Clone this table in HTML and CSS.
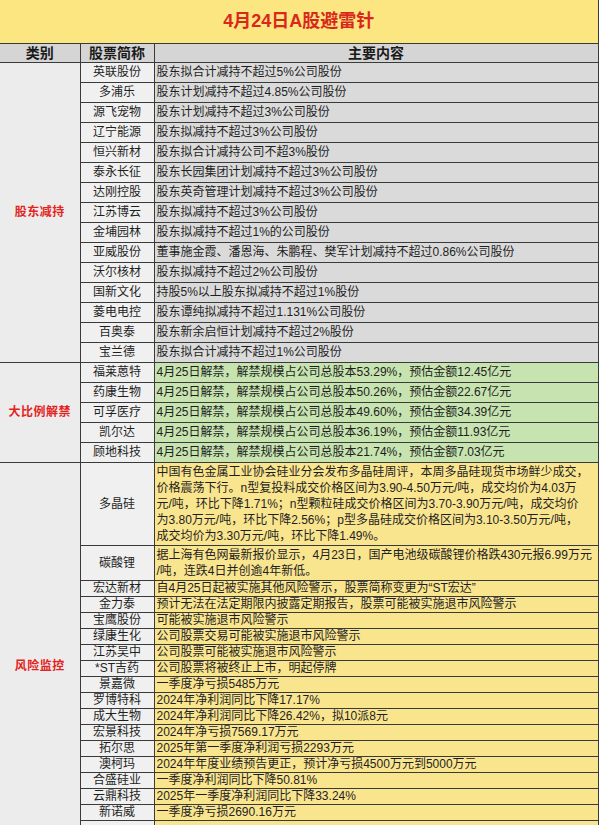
FILE: index.html
```html
<!DOCTYPE html>
<html lang="zh-CN">
<head>
<meta charset="utf-8">
<title>4月24日A股避雷针</title>
<link rel="stylesheet" href="styles.css">
</head>
<body>
<table class="sheet">
  <colgroup><col class="c-cat"><col class="c-name"><col class="c-main"></colgroup>
  <tr class="title"><td colspan="3">4月24日A股避雷针</td></tr>
  <tr class="head"><th class="first">类别</th><th>股票简称</th><th>主要内容</th></tr>

  <tr class="s1"><td class="cat" rowspan="15">股东减持</td><td class="name">英联股份</td><td class="main grey">股东拟合计减持不超过5%公司股份</td></tr>
  <tr class="s1"><td class="name">多浦乐</td><td class="main grey">股东计划减持不超过4.85%公司股份</td></tr>
  <tr class="s1"><td class="name">源飞宠物</td><td class="main grey">股东计划减持不超过3%公司股份</td></tr>
  <tr class="s1"><td class="name">辽宁能源</td><td class="main grey">股东拟减持不超过3%公司股份</td></tr>
  <tr class="s1"><td class="name">恒兴新材</td><td class="main grey">股东拟合计减持公司不超3%股份</td></tr>
  <tr class="s1"><td class="name">泰永长征</td><td class="main grey">股东长园集团计划减持不超过3%公司股份</td></tr>
  <tr class="s1"><td class="name">达刚控股</td><td class="main grey">股东英奇管理计划减持不超过3%公司股份</td></tr>
  <tr class="s1"><td class="name">江苏博云</td><td class="main grey">股东拟减持不超过3%公司股份</td></tr>
  <tr class="s1"><td class="name">金埔园林</td><td class="main grey">股东拟减持不超过1%的公司股份</td></tr>
  <tr class="s1"><td class="name">亚威股份</td><td class="main grey">董事施金霞、潘恩海、朱鹏程、樊军计划减持不超过0.86%公司股份</td></tr>
  <tr class="s1"><td class="name">沃尔核材</td><td class="main grey">股东拟减持不超过2%公司股份</td></tr>
  <tr class="s1"><td class="name">国新文化</td><td class="main grey">持股5%以上股东拟减持不超过1%股份</td></tr>
  <tr class="s1"><td class="name">菱电电控</td><td class="main grey">股东谭纯拟减持不超过1.131%公司股份</td></tr>
  <tr class="s1"><td class="name">百奥泰</td><td class="main grey">股东新余启恒计划减持不超过2%股份</td></tr>
  <tr class="s1"><td class="name">宝兰德</td><td class="main grey">股东拟合计减持不超过1%公司股份</td></tr>

  <tr class="s1"><td class="cat" rowspan="5">大比例解禁</td><td class="name">福莱蒽特</td><td class="main green">4月25日解禁，解禁规模占公司总股本53.29%，预估金额12.45亿元</td></tr>
  <tr class="s1"><td class="name">药康生物</td><td class="main green">4月25日解禁，解禁规模占公司总股本50.26%，预估金额22.67亿元</td></tr>
  <tr class="s1"><td class="name">可孚医疗</td><td class="main green">4月25日解禁，解禁规模占公司总股本49.60%，预估金额34.39亿元</td></tr>
  <tr class="s1"><td class="name">凯尔达</td><td class="main green">4月25日解禁，解禁规模占公司总股本36.19%，预估金额11.93亿元</td></tr>
  <tr class="s1"><td class="name">顾地科技</td><td class="main green">4月25日解禁，解禁规模占公司总股本21.74%，预估金额7.03亿元</td></tr>

  <tr class="multi"><td class="cat" rowspan="20">风险监控</td><td class="name">多晶硅</td><td class="main yellow">中国有色金属工业协会硅业分会发布多晶硅周评，本周多晶硅现货市场鲜少成交，<br>价格震荡下行。n型复投料成交价格区间为3.90-4.50万元/吨，成交均价为4.03万<br>元/吨，环比下降1.71%；n型颗粒硅成交价格区间为3.70-3.90万元/吨，成交均价<br>为3.80万元/吨，环比下降2.56%；p型多晶硅成交价格区间为3.10-3.50万元/吨，<br>成交均价为3.30万元/吨，环比下降1.49%。</td></tr>
  <tr class="multi"><td class="name">碳酸锂</td><td class="main yellow">据上海有色网最新报价显示，4月23日，国产电池级碳酸锂价格跌430元报6.99万元<br>/吨，连跌4日并创逾4年新低。</td></tr>
  <tr class="s3"><td class="name">宏达新材</td><td class="main yellow">自4月25日起被实施其他风险警示，股票简称变更为“ST宏达”</td></tr>
  <tr class="s3"><td class="name">金力泰</td><td class="main yellow">预计无法在法定期限内披露定期报告，股票可能被实施退市风险警示</td></tr>
  <tr class="s3"><td class="name">宝鹰股份</td><td class="main yellow">可能被实施退市风险警示</td></tr>
  <tr class="s3"><td class="name">绿康生化</td><td class="main yellow">公司股票交易可能被实施退市风险警示</td></tr>
  <tr class="s3"><td class="name">江苏吴中</td><td class="main yellow">公司股票可能被实施退市风险警示</td></tr>
  <tr class="s3"><td class="name">*ST吉药</td><td class="main yellow">公司股票将被终止上市，明起停牌</td></tr>
  <tr class="s3"><td class="name">景嘉微</td><td class="main yellow">一季度净亏损5485万元</td></tr>
  <tr class="s3"><td class="name">罗博特科</td><td class="main yellow">2024年净利润同比下降17.17%</td></tr>
  <tr class="s3"><td class="name">成大生物</td><td class="main yellow">2024年净利润同比下降26.42%，拟10派8元</td></tr>
  <tr class="s3"><td class="name">宏景科技</td><td class="main yellow">2024年净亏损7569.17万元</td></tr>
  <tr class="s3"><td class="name">拓尔思</td><td class="main yellow">2025年第一季度净利润亏损2293万元</td></tr>
  <tr class="s3"><td class="name">澳柯玛</td><td class="main yellow">2024年年度业绩预告更正，预计净亏损4500万元到5000万元</td></tr>
  <tr class="s3"><td class="name">合盛硅业</td><td class="main yellow">一季度净利润同比下降50.81%</td></tr>
  <tr class="s3"><td class="name">云鼎科技</td><td class="main yellow">2025年一季度净利润同比下降33.24%</td></tr>
  <tr class="s3"><td class="name">新诺威</td><td class="main yellow">一季度净亏损2690.16万元</td></tr>
  <tr class="s3"><td class="name">&nbsp;</td><td class="main yellow">&nbsp;</td></tr>
  <tr class="s3"><td class="name">&nbsp;</td><td class="main yellow">&nbsp;</td></tr>
  <tr class="s3"><td class="name">&nbsp;</td><td class="main yellow">&nbsp;</td></tr>
</table>
</body>
</html>
```

FILE: styles.css
```css
html, body {
  margin: 0;
  padding: 0;
  background: #ffffff;
}

body {
  width: 600px;
  height: 825px;
  overflow: hidden;
  font-family: "Liberation Sans", "Noto Sans CJK SC", sans-serif;
  color: #1e1e1e;
}

.sheet {
  width: 598px;
  border-collapse: collapse;
  table-layout: fixed;
}

.c-cat { width: 80px; }
.c-name { width: 74px; }
.c-main { width: 444px; }

.sheet td,
.sheet th {
  padding: 0;
  border: 1px solid #3a3a3a;
  font-size: 12px;
  white-space: nowrap;
  overflow: hidden;
}

.title td {
  border-top: none;
  border-left: none;
  background: #fce681;
  color: #d8281c;
  font-size: 18px;
  font-weight: bold;
  line-height: 43px;
  text-align: center;
}

.head th {
  background: #d5d5d5;
  font-size: 14px;
  font-weight: bold;
  line-height: 18px;
  text-align: center;
  color: #1a1a1a;
}

.head th.first { border-left: none; }

.cat {
  border-left: none !important;
  background: #ececec;
  color: #e3241c;
  font-weight: bold;
  font-size: 12.5px;
  letter-spacing: 0.5px;
  text-align: center;
  vertical-align: middle;
}

.name {
  background: #f0f0f0;
  text-align: center;
  vertical-align: middle;
}

.main {
  text-align: left;
  padding-left: 2px !important;
}

.grey { background: #dadada; }
.green { background: #c6e3b0; }
.yellow { background: #fae58f; }

.s1 td { line-height: 19px; }
.s3 td { line-height: 15px; }
.multi td { line-height: 16px; }
.multi td.main { padding-top: 1px; padding-bottom: 1px; }
```
